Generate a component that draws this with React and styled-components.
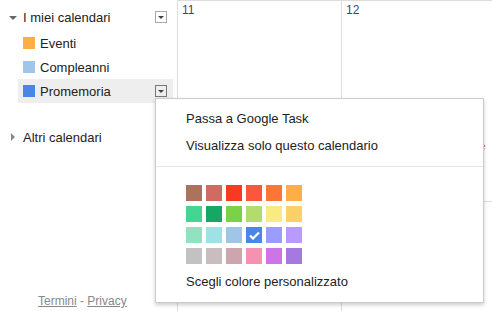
import styled, { createGlobalStyle } from "styled-components";

const GlobalStyle = createGlobalStyle`
  html, body {
    margin: 0;
    padding: 0;
    background: #fff;
  }
  body {
    font-family: Arial, "Liberation Sans", sans-serif;
    color: #222;
  }
`;

const Page = styled.div`
  position: relative;
  display: flex;
  width: 492px;
  height: 311px;
  overflow: hidden;
  background: #fff;
`;

const Sidebar = styled.aside`
  display: flex;
  flex-direction: column;
  width: 177px;
  flex-shrink: 0;
  padding-top: 5px;
  box-sizing: border-box;
`;

const SectionHeader = styled.div`
  display: flex;
  align-items: center;
  height: 24px;
  padding-left: ${(p) => p.$indent}px;
  padding-right: 10px;
  font-size: 13px;
  margin-top: ${(p) => p.$top || 0}px;
`;

const Caret = styled.span`
  width: 0;
  height: 0;
  margin-right: ${(p) => p.$gap}px;
  ${(p) =>
    p.$open
      ? `
    border-left: 4px solid transparent;
    border-right: 4px solid transparent;
    border-top: 4px solid #666;
    margin-top: 2px;
  `
      : `
    border-top: 4px solid transparent;
    border-bottom: 4px solid transparent;
    border-left: 4px solid #888;
  `}
`;

const Label = styled.span`
  flex: 1;
  white-space: nowrap;
`;

const MenuButton = styled.span`
  display: flex;
  align-items: center;
  justify-content: center;
  width: 12px;
  height: 12px;
  box-sizing: border-box;
  border: 1px solid ${(p) => (p.$active ? "#777" : "#aaa")};
  background: ${(p) => (p.$active ? "#eee" : "#fff")};

  &::after {
    content: "";
    border-left: 3px solid transparent;
    border-right: 3px solid transparent;
    border-top: 3px solid #444;
  }
`;

const CalendarList = styled.ul`
  list-style: none;
  margin: 2px 0 0;
  padding: 0;
`;

const CalendarItem = styled.li`
  display: flex;
  align-items: center;
  height: 24px;
  margin-left: 18px;
  width: 155px;
  padding: 0 6px 0 5px;
  box-sizing: border-box;
  font-size: 13px;
  background: ${(p) => (p.$active ? "#eee" : "transparent")};
`;

const Swatch = styled.span`
  width: 12px;
  height: 12px;
  margin-right: 5px;
  background: ${(p) => p.$color};
`;

const Footer = styled.div`
  margin-top: auto;
  padding: 0 0 3px 38px;
  font-size: 12px;
  color: #888;
  line-height: 14px;

  a {
    color: #888;
    text-decoration: underline;
  }
`;

const Calendar = styled.section`
  flex: 1;
  display: flex;
  flex-direction: column;
  border-left: 1px solid #ddd;
`;

const DayHeader = styled.div`
  height: 10px;
  border-bottom: 1px solid #ddd;
  display: grid;
  grid-template-columns: 163px 1fr;

  div + div {
    border-left: 1px solid #ddd;
  }
`;

const WeekRow = styled.div`
  display: grid;
  grid-template-columns: 163px 1fr;
  height: ${(p) => p.$height}px;
  border-bottom: 1px solid #ddd;
  flex-shrink: 0;
`;

const DayCell = styled.div`
  position: relative;
  padding: 2px 4px;
  font-size: 12px;
  color: #3a4a66;
  & + & {
    border-left: 1px solid #ddd;
  }
`;

const EventText = styled.span`
  position: absolute;
  top: 140px;
  left: 138px;
  font-size: 10px;
  color: #d06b64;
`;

const Menu = styled.div`
  position: absolute;
  left: 155px;
  top: 98px;
  width: 329px;
  height: 205px;
  box-sizing: border-box;
  background: #fff;
  border: 1px solid #ccc;
  box-shadow: 0 2px 4px rgba(0, 0, 0, 0.2);
  padding: 6px 0 0;
  font-size: 13px;
  color: #222;
`;

const MenuItem = styled.div`
  height: 27px;
  line-height: 27px;
  padding-left: 30px;
  white-space: nowrap;
`;

const Separator = styled.div`
  height: 1px;
  background: #e5e5e5;
  margin: 7px 0 18px;
`;

const Palette = styled.div`
  display: grid;
  grid-template-columns: repeat(6, 16px);
  grid-auto-rows: 16px;
  column-gap: 4px;
  row-gap: 5px;
  padding-left: 30px;
  margin-bottom: 4px;
`;

const ColorChip = styled.span`
  display: flex;
  align-items: center;
  justify-content: center;
  background: ${(p) => p.$color};
`;

const palette = [
  "#ac725e", "#d06b64", "#f83a22", "#fa573c", "#ff7537", "#ffad46",
  "#42d692", "#16a765", "#7bd148", "#b3dc6c", "#fbe983", "#fad165",
  "#92e1c0", "#9fe1e7", "#9fc6e7", "#4986e7", "#9a9cff", "#b99aff",
  "#c2c2c2", "#cabdbf", "#cca6ac", "#f691b2", "#cd74e6", "#a47ae2",
];

const calendars = [
  { name: "Eventi", color: "#ffad46" },
  { name: "Compleanni", color: "#9fc6e7" },
  { name: "Promemoria", color: "#4986e7", active: true },
];

function Check() {
  return (
    <svg width="11" height="9" viewBox="0 0 11 9">
      <path d="M1 4.5 L4 7.5 L10 1.5" stroke="#fff" strokeWidth="2.2" fill="none" />
    </svg>
  );
}

export default function App() {
  return (
    <>
      <GlobalStyle />
      <Page>
        <Sidebar>
          <SectionHeader $indent={9}>
            <Caret $open $gap={6} />
            <Label>I miei calendari</Label>
            <MenuButton />
          </SectionHeader>
          <CalendarList>
            {calendars.map((c) => (
              <CalendarItem key={c.name} $active={c.active}>
                <Swatch $color={c.color} />
                <Label>{c.name}</Label>
                {c.active && <MenuButton $active />}
              </CalendarItem>
            ))}
          </CalendarList>
          <SectionHeader $indent={11} $top={22}>
            <Caret $gap={8} />
            <Label>Altri calendari</Label>
          </SectionHeader>
          <Footer>
            <a>Termini</a> - <a>Privacy</a>
          </Footer>
        </Sidebar>

        <Calendar>
          <DayHeader>
            <div />
            <div />
          </DayHeader>
          <WeekRow $height={200}>
            <DayCell>11</DayCell>
            <DayCell>
              12
              <EventText>e</EventText>
            </DayCell>
          </WeekRow>
          <WeekRow $height={120}>
            <DayCell />
            <DayCell />
          </WeekRow>
        </Calendar>

        <Menu>
          <MenuItem>Passa a Google Task</MenuItem>
          <MenuItem>Visualizza solo questo calendario</MenuItem>
          <Separator />
          <Palette>
            {palette.map((c) => (
              <ColorChip key={c} $color={c}>
                {c === "#4986e7" && <Check />}
              </ColorChip>
            ))}
          </Palette>
          <MenuItem>Scegli colore personalizzato</MenuItem>
        </Menu>
      </Page>
    </>
  );
}
